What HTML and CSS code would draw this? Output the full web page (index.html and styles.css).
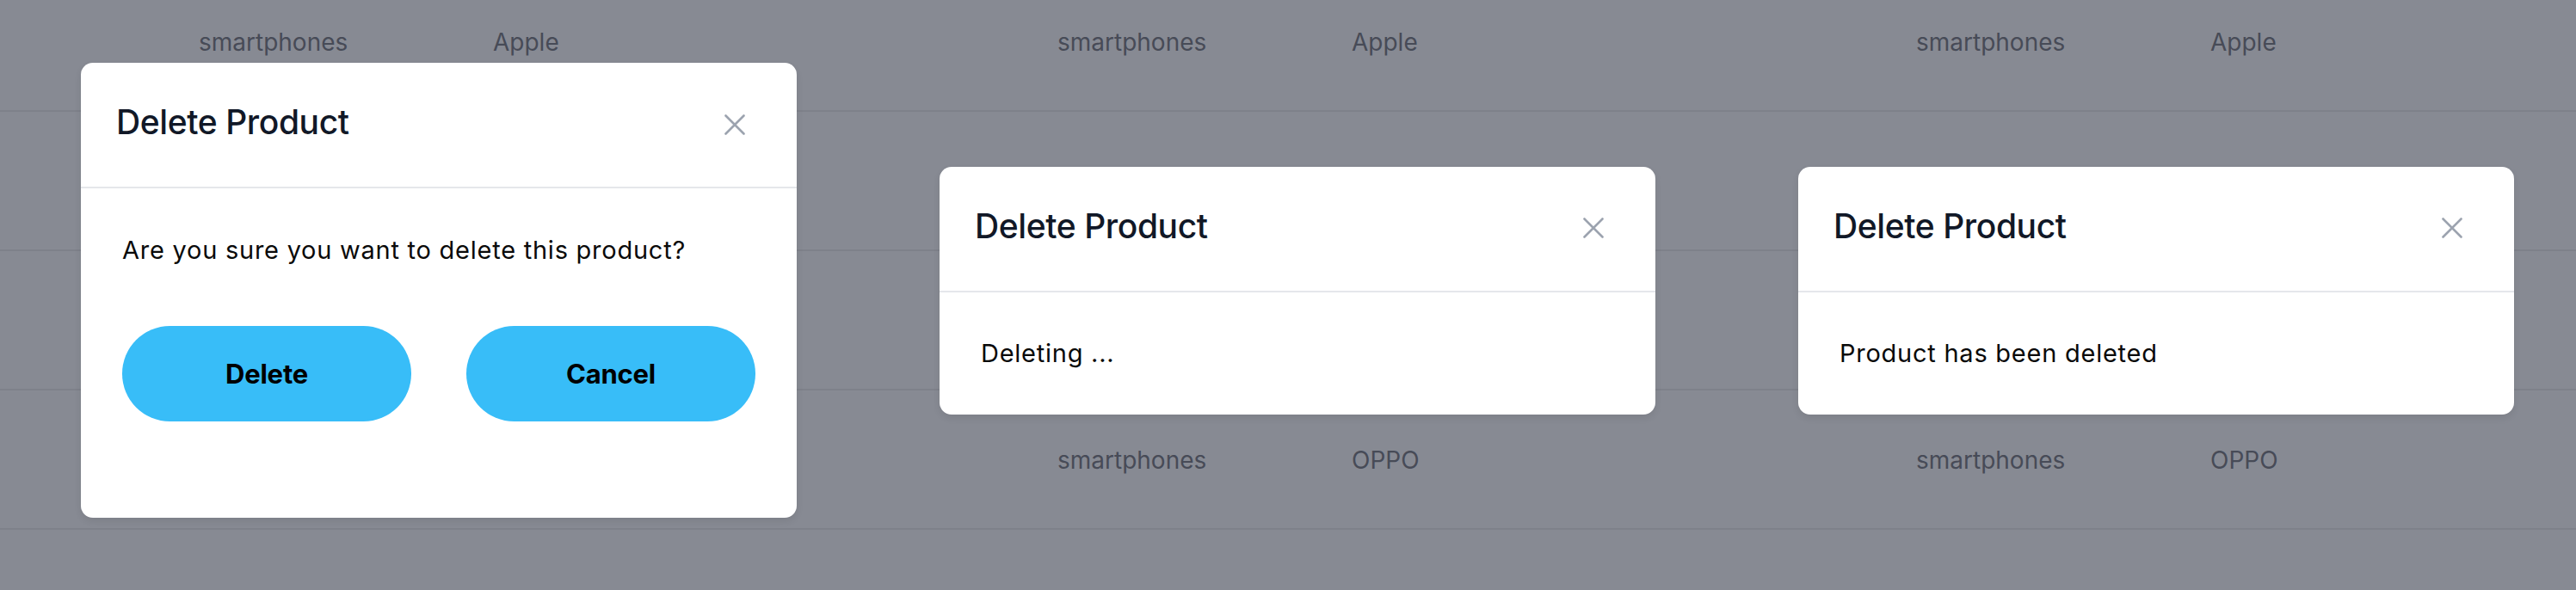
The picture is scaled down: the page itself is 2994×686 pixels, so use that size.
FILE: index.html
```html
<!DOCTYPE html>
<html lang="en">
<head>
<meta charset="utf-8">
<title>Delete Product</title>
<link rel="stylesheet" href="styles.css">
</head>
<body>
<div class="strip">

  <section class="panel">
    <div class="table">
      <div class="row"><span class="cell-cat">smartphones</span><span class="cell-brand">Apple</span></div>
      <div class="row"><span class="cell-cat">smartphones</span><span class="cell-brand">Apple</span></div>
      <div class="row"><span class="cell-cat">smartphones</span><span class="cell-brand">Samsung</span></div>
      <div class="row"><span class="cell-cat">smartphones</span><span class="cell-brand">OPPO</span></div>
      <div class="row"></div>
    </div>
    <div class="overlay">
      <div class="modal">
        <div class="modal-header">
          <h2 class="modal-title">Delete Product</h2>
          <button class="close" aria-label="Close">
            <svg viewBox="0 0 24 24" width="24" height="24"><path d="M1.5 1.5 L22.5 22.5 M22.5 1.5 L1.5 22.5" stroke="#9ca3af" stroke-width="2.6" stroke-linecap="round" fill="none"/></svg>
          </button>
        </div>
        <div class="modal-body confirm">
          <p class="message">Are you sure you want to delete this product?</p>
          <div class="actions">
            <button class="btn">Delete</button>
            <button class="btn">Cancel</button>
          </div>
        </div>
      </div>
    </div>
  </section>

  <section class="panel">
    <div class="table">
      <div class="row"><span class="cell-cat">smartphones</span><span class="cell-brand">Apple</span></div>
      <div class="row"><span class="cell-cat">smartphones</span><span class="cell-brand">Apple</span></div>
      <div class="row"><span class="cell-cat">smartphones</span><span class="cell-brand">Samsung</span></div>
      <div class="row"><span class="cell-cat">smartphones</span><span class="cell-brand">OPPO</span></div>
      <div class="row"></div>
    </div>
    <div class="overlay">
      <div class="modal">
        <div class="modal-header">
          <h2 class="modal-title">Delete Product</h2>
          <button class="close" aria-label="Close">
            <svg viewBox="0 0 24 24" width="24" height="24"><path d="M1.5 1.5 L22.5 22.5 M22.5 1.5 L1.5 22.5" stroke="#9ca3af" stroke-width="2.6" stroke-linecap="round" fill="none"/></svg>
          </button>
        </div>
        <div class="modal-body status">
          <p class="message">Deleting ...</p>
        </div>
      </div>
    </div>
  </section>

  <section class="panel">
    <div class="table">
      <div class="row"><span class="cell-cat">smartphones</span><span class="cell-brand">Apple</span></div>
      <div class="row"><span class="cell-cat">smartphones</span><span class="cell-brand">Apple</span></div>
      <div class="row"><span class="cell-cat">smartphones</span><span class="cell-brand">Samsung</span></div>
      <div class="row"><span class="cell-cat">smartphones</span><span class="cell-brand">OPPO</span></div>
      <div class="row"></div>
    </div>
    <div class="overlay">
      <div class="modal">
        <div class="modal-header">
          <h2 class="modal-title">Delete Product</h2>
          <button class="close" aria-label="Close">
            <svg viewBox="0 0 24 24" width="24" height="24"><path d="M1.5 1.5 L22.5 22.5 M22.5 1.5 L1.5 22.5" stroke="#9ca3af" stroke-width="2.6" stroke-linecap="round" fill="none"/></svg>
          </button>
        </div>
        <div class="modal-body status">
          <p class="message">Product has been deleted</p>
        </div>
      </div>
    </div>
  </section>

</div>
</body>
</html>
```

FILE: styles.css
```css
* { box-sizing: border-box; }

html, body {
  margin: 0;
  padding: 0;
  background: #878a93;
  font-family: Inter, "Liberation Sans", sans-serif;
}

.strip {
  display: flex;
  width: 2994px;
  height: 686px;
}

.panel {
  position: relative;
  width: 998px;
  height: 686px;
  flex: 0 0 998px;
  overflow: hidden;
  background: #878a93;
}

.table {
  margin-top: -32px;
  display: flex;
  flex-direction: column;
}

.row {
  display: grid;
  grid-template-columns: 231px 342px 1fr;
  align-items: center;
  height: 162px;
  border-bottom: 2px solid #7e818a;
  font-size: 28px;
  color: #474b57;
  padding-top: 2px;
}

.cell-cat { grid-column: 2; }
.cell-brand { grid-column: 3; }

.overlay {
  position: absolute;
  inset: 0;
  display: flex;
  align-items: center;
  padding: 0 0 11px 94px;
}

.modal {
  width: 832px;
  background: #ffffff;
  border-radius: 14px;
  box-shadow: 0 4px 8px rgba(0, 0, 0, 0.08);
  overflow: hidden;
}

.modal-header {
  height: 146px;
  display: flex;
  align-items: center;
  justify-content: space-between;
  padding: 0 60px 6px 41px;
  border-bottom: 2px solid #e5e7eb;
}

.modal-title {
  margin: 0;
  font-size: 39px;
  font-weight: 500;
  color: #111827;
  line-height: 56px;
  letter-spacing: -0.4px;
}

.close {
  border: 0;
  background: none;
  padding: 0;
  width: 24px;
  height: 24px;
  display: flex;
  margin-top: 5px;
}

.modal-body {
  padding: 0 48px;
}

.message {
  margin: 0;
  font-size: 29px;
  line-height: 40px;
  letter-spacing: 0.75px;
  color: #0a0a0a;
}

.modal-body.confirm {
  padding-top: 52px;
  padding-bottom: 112px;
}

.modal-body.status {
  padding-top: 51px;
  padding-bottom: 51px;
}

.actions {
  display: flex;
  gap: 64px;
  margin-top: 68px;
}

.btn {
  flex: 1;
  height: 111px;
  border: 0;
  border-radius: 999px;
  background: #38bdf8;
  color: #000;
  font-family: Inter, "Liberation Sans", sans-serif;
  font-size: 31px;
  font-weight: 700;
  letter-spacing: -0.2px;
}
```
